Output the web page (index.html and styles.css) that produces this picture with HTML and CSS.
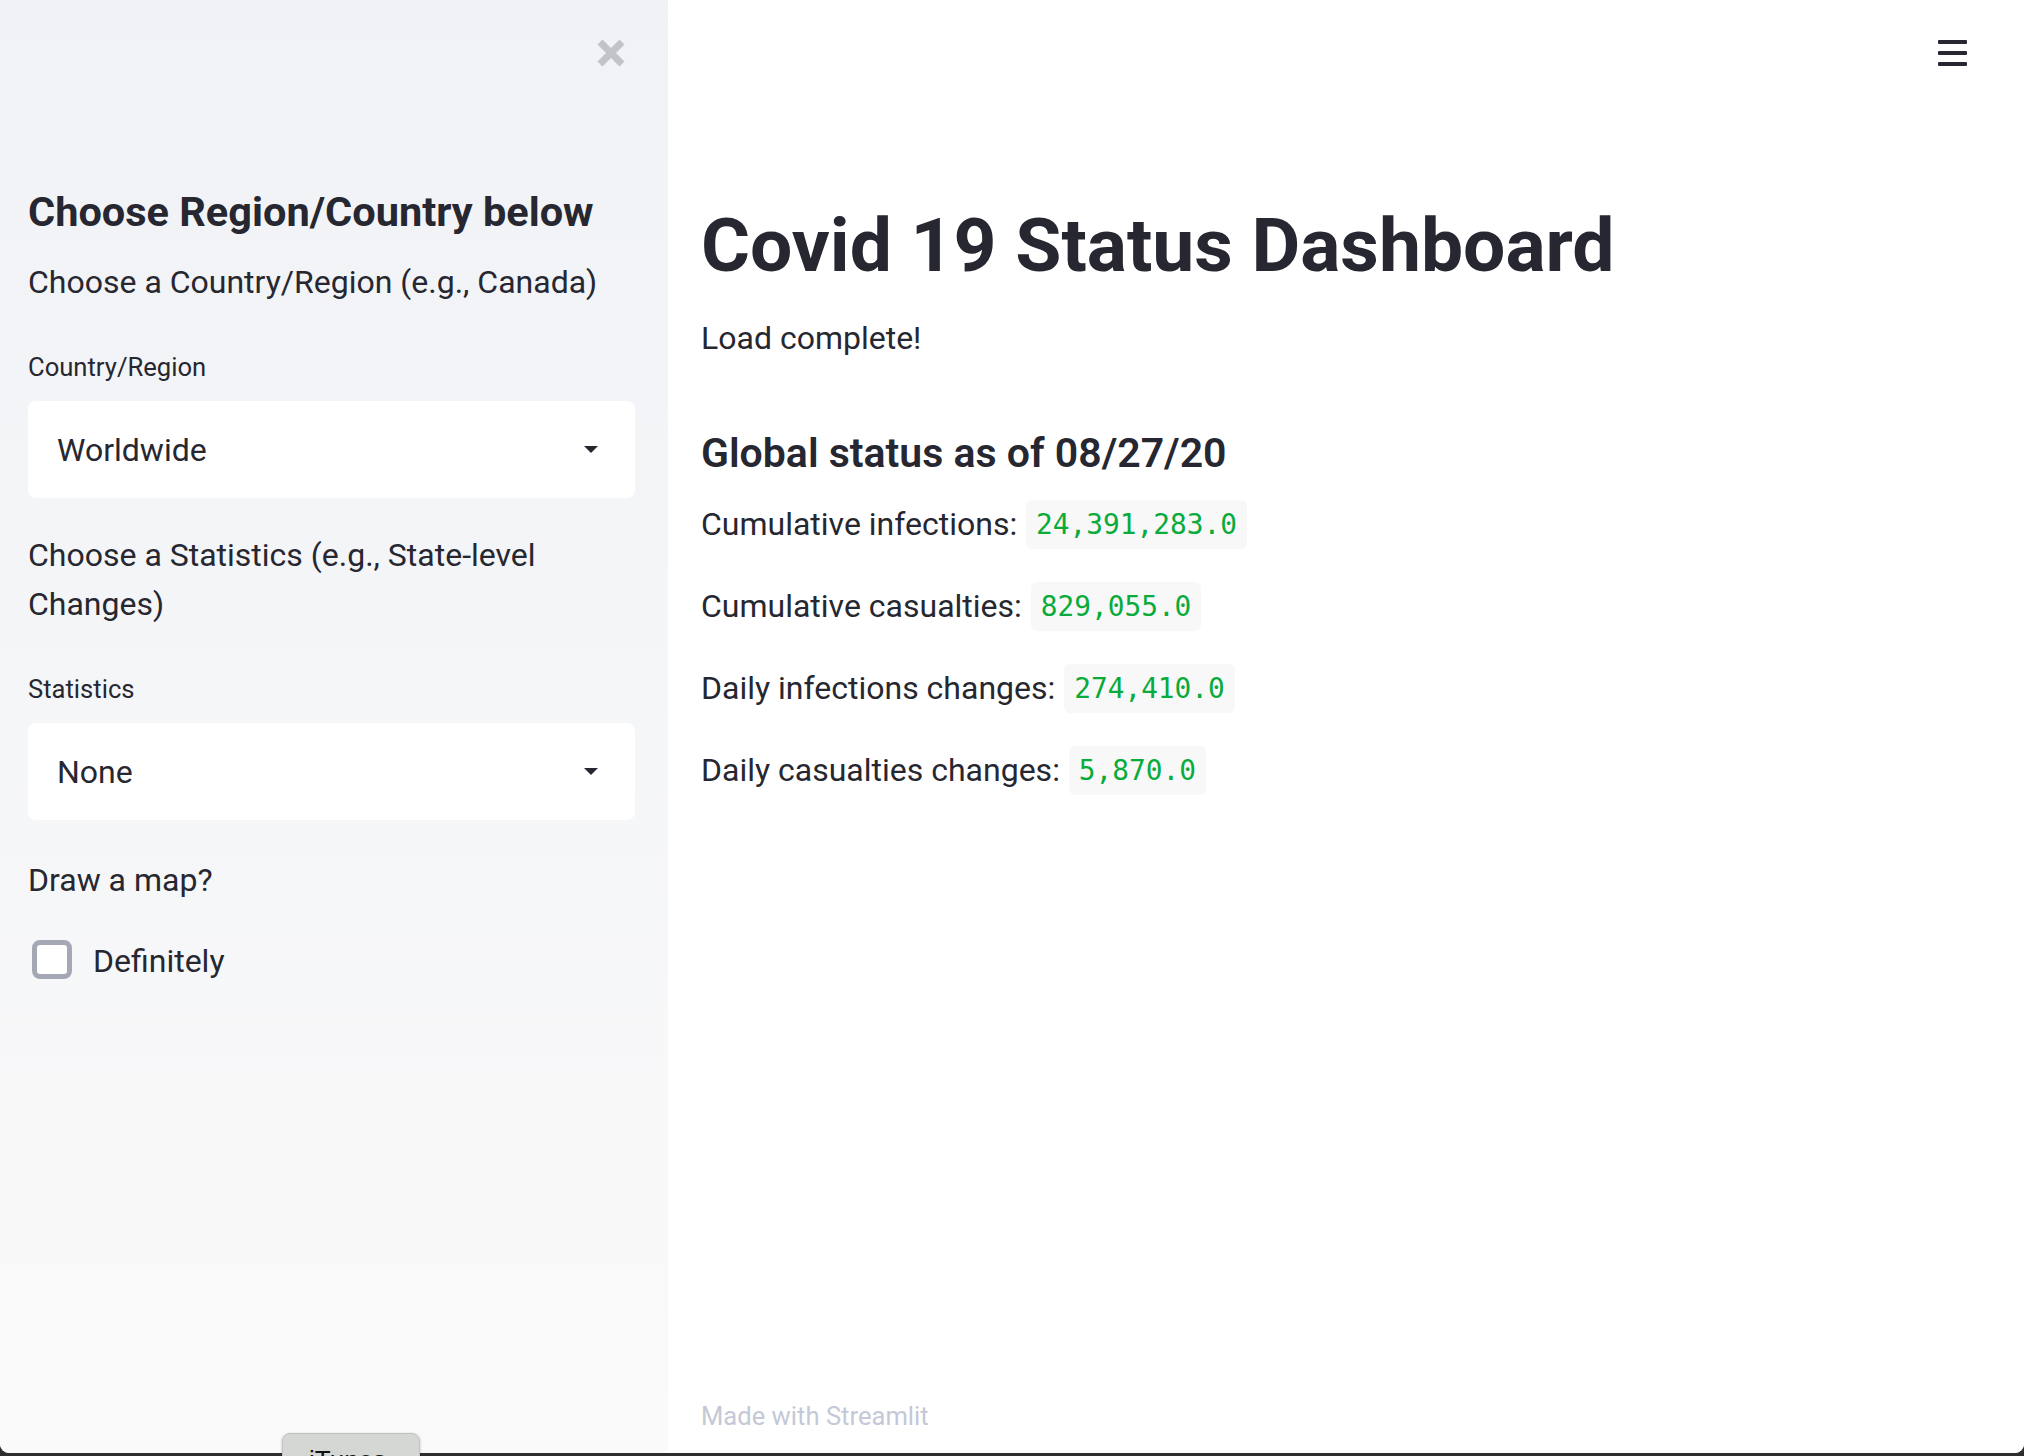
FILE: index.html
```html
<!DOCTYPE html>
<html>
<head>
<meta charset="utf-8">
<title>Covid 19 Status Dashboard</title>
<link rel="stylesheet" href="styles.css">
</head>
<body>
<div class="window">
  <aside class="sidebar">
    <div class="sidebar-top">
      <button class="close-btn" aria-label="Close sidebar">
        <svg width="28" height="28" viewBox="0 0 28 28"><path d="M3 3 L25 25 M25 3 L3 25" stroke="#c2c3c8" stroke-width="7" fill="none"/></svg>
      </button>
    </div>
    <h2 class="side-heading">Choose Region/Country below</h2>
    <p class="side-text">Choose a Country/Region (e.g., Canada)</p>
    <div class="field">
      <div class="field-label">Country/Region</div>
      <div class="select">
        <span class="select-value">Worldwide</span>
        <span class="caret"></span>
      </div>
    </div>
    <p class="side-text side-text-wrap">Choose a Statistics (e.g., State-level Changes)</p>
    <div class="field">
      <div class="field-label field-label-2">Statistics</div>
      <div class="select">
        <span class="select-value">None</span>
        <span class="caret"></span>
      </div>
    </div>
    <p class="side-text side-text-map">Draw a map?</p>
    <label class="checkbox-row">
      <span class="checkbox"></span>
      <span class="checkbox-text">Definitely</span>
    </label>
  </aside>
  <main class="main">
    <div class="topbar">
      <button class="menu-btn" aria-label="Menu">
        <span></span><span></span><span></span>
      </button>
    </div>
    <div class="content">
      <h1 class="title">Covid 19 Status Dashboard</h1>
      <p class="text">Load complete!</p>
      <h3 class="subtitle">Global status as of 08/27/20</h3>
      <p class="stat">Cumulative infections: <code>24,391,283.0</code></p>
      <p class="stat">Cumulative casualties: <code>829,055.0</code></p>
      <p class="stat">Daily infections changes: <code>274,410.0</code></p>
      <p class="stat">Daily casualties changes: <code>5,870.0</code></p>
    </div>
    <footer class="footer">Made with Streamlit</footer>
  </main>
</div>
<div class="dock-tooltip">iTunes</div>
</body>
</html>
```

FILE: styles.css
```css
html, body {
  margin: 0;
  padding: 0;
  height: 1456px;
  overflow: hidden;
}

body {
  background: linear-gradient(180deg, #5a5a5a, #2e2e2e);
  font-family: Roboto, "Noto Sans", sans-serif;
  color: #262730;
  position: relative;
}

.window {
  display: flex;
  height: 1453px;
  border-radius: 0 0 9px 9px;
  overflow: hidden;
  background: #ffffff;
}

/* Sidebar */
.sidebar {
  width: 668px;
  flex: 0 0 668px;
  box-sizing: border-box;
  padding: 0 33px 0 28px;
  background: linear-gradient(180deg, #f0f2f6 0%, #fafafa 100%);
  display: flex;
  flex-direction: column;
}

.sidebar-top {
  display: flex;
  justify-content: flex-end;
  height: 182px;
}

.close-btn {
  margin: 39px 10px 0 0;
  padding: 0;
  border: 0;
  background: none;
  width: 28px;
  height: 28px;
  align-self: flex-start;
  display: flex;
}

.side-heading {
  margin: 0;
  font-size: 41.5px;
  line-height: 60px;
  font-weight: 700;
  white-space: nowrap;
}

.side-text {
  margin: 15px 0 0;
  font-size: 32px;
  line-height: 51px;
  font-weight: 400;
}

.side-text-wrap {
  margin-top: 33px;
  line-height: 49px;
  padding-right: 80px;
}

.side-text-map {
  margin-top: 35px;
}

.field {
  display: flex;
  flex-direction: column;
}

.field-label {
  margin-top: 41px;
  font-size: 25.6px;
  line-height: 36px;
}

.field-label-2 {
  margin-top: 42px;
}

.select {
  margin-top: 16px;
  height: 97px;
  background: #ffffff;
  border-radius: 8px;
  display: flex;
  align-items: center;
  justify-content: space-between;
  padding: 0 37px 0 29px;
}

.select-value {
  font-size: 32px;
  line-height: 40px;
}

.caret {
  width: 0;
  height: 0;
  border-left: 7px solid transparent;
  border-right: 7px solid transparent;
  border-top: 7px solid #262730;
}

.checkbox-row {
  margin-top: 28px;
  display: flex;
  align-items: center;
  height: 51px;
  padding-left: 4px;
}

.checkbox {
  width: 40px;
  height: 39px;
  box-sizing: border-box;
  border: 5px solid #a4a8b5;
  border-radius: 8px;
  background: #ffffff;
}

.checkbox-text {
  margin-left: 21px;
  font-size: 32px;
  line-height: 51px;
  position: relative;
  top: 2px;
}

/* Main */
.main {
  flex: 1;
  position: relative;
  background: #ffffff;
  padding-left: 33px;
  display: flex;
  flex-direction: column;
}

.topbar {
  display: flex;
  justify-content: flex-end;
  height: 182px;
  padding-right: 57px;
}

.menu-btn {
  margin-top: 40px;
  width: 29px;
  height: 26px;
  padding: 0;
  border: 0;
  background: none;
  display: flex;
  flex-direction: column;
  justify-content: space-between;
  align-self: flex-start;
}

.menu-btn span {
  display: block;
  height: 4px;
  width: 29px;
  background: #262730;
  border-radius: 1px;
}

.content {
  flex: 1;
}

.title {
  margin: 18px 0 0;
  font-size: 75px;
  line-height: 90px;
  font-weight: 700;
  letter-spacing: 0;
}

.text {
  margin: 23px 0 0;
  font-size: 32px;
  line-height: 50px;
}

.subtitle {
  margin: 62px 0 0;
  font-size: 41px;
  line-height: 56px;
  font-weight: 600;
}

.stat {
  margin: 0;
  font-size: 32px;
  line-height: 50px;
  height: 50px;
  display: flex;
  align-items: center;
  white-space: pre;
}

.subtitle + .stat {
  margin-top: 18px;
}

.stat + .stat {
  margin-top: 32px;
}

.stat code {
  margin-left: 1px;
  font-family: "DejaVu Sans Mono", monospace;
  font-size: 27.8px;
  line-height: 49px;
  height: 49px;
  color: #09ab3b;
  background: #f8f8f9;
  border-radius: 6px;
  padding: 0 10px;
  display: inline-flex;
  align-items: center;
}

.footer {
  height: 55px;
  font-size: 25.6px;
  line-height: 36px;
  color: #c5c8d6;
}

.dock-tooltip {
  position: absolute;
  left: 282px;
  top: 1433px;
  width: 138px;
  height: 40px;
  box-sizing: border-box;
  background: #d5d7d5;
  border: 1px solid #c2c4c2;
  border-radius: 8px;
  font-family: "Liberation Sans", sans-serif;
  font-size: 26px;
  line-height: 26px;
  padding: 13px 0 0 26px;
  color: #111;
  box-shadow: 0 1px 3px rgba(0,0,0,0.25);
}
```
